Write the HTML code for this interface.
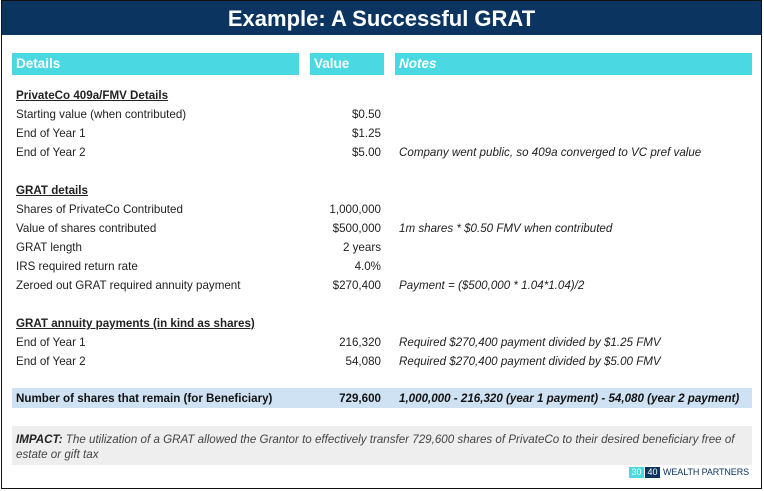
<!DOCTYPE html><html><head><style>
body{margin:0;width:764px;height:491px;background:#fff;font-family:"Liberation Sans",Arial,sans-serif;position:relative;overflow:hidden}
.frame{position:absolute;left:1px;top:0;width:759px;height:487px;border:1px solid #111}
.hdr{position:absolute;left:2px;top:1px;width:759px;height:34px;background:#0b3560;color:#fff;font-weight:bold;font-size:22px;text-align:center;line-height:35px}
.bar{position:absolute;top:53px;height:22px;background:#4ad8e2;color:#fff;font-weight:bold;font-size:13.5px;line-height:22px;padding-left:4px;box-sizing:border-box}
.t{position:absolute;font-size:11.6px;color:#222;white-space:nowrap;line-height:14px}
.v{position:absolute;right:383px;font-size:11.6px;color:#222;white-space:nowrap;line-height:14px;text-align:right}
.n{position:absolute;left:399px;font-size:11.6px;font-style:italic;color:#222;white-space:nowrap;line-height:14px}
.u{font-weight:bold;text-decoration:underline}
</style></head><body>
<div class="frame"></div>
<div class="hdr">Example: A Successful GRAT</div>
<div class="bar" style="left:12px;width:287px">Details</div>
<div class="bar" style="left:310px;width:74px">Value</div>
<div class="bar" style="left:395px;width:357px;font-style:italic">Notes</div>

<div class="t u" style="left:16px;top:89px">PrivateCo 409a/FMV Details</div>
<div class="t" style="left:16px;top:108px">Starting value (when contributed)</div><div class="v" style="top:108px">$0.50</div>
<div class="t" style="left:16px;top:127px">End of Year 1</div><div class="v" style="top:127px">$1.25</div>
<div class="t" style="left:16px;top:146px">End of Year 2</div><div class="v" style="top:146px">$5.00</div><div class="n" style="top:146px">Company went public, so 409a converged to VC pref value</div>

<div class="t u" style="left:16px;top:184px">GRAT details</div>
<div class="t" style="left:16px;top:203px">Shares of PrivateCo Contributed</div><div class="v" style="top:203px">1,000,000</div>
<div class="t" style="left:16px;top:222px">Value of shares contributed</div><div class="v" style="top:222px">$500,000</div><div class="n" style="top:222px">1m shares * $0.50 FMV when contributed</div>
<div class="t" style="left:16px;top:241px">GRAT length</div><div class="v" style="top:241px">2 years</div>
<div class="t" style="left:16px;top:260px">IRS required return rate</div><div class="v" style="top:260px">4.0%</div>
<div class="t" style="left:16px;top:279px">Zeroed out GRAT required annuity payment</div><div class="v" style="top:279px">$270,400</div><div class="n" style="top:279px">Payment = ($500,000 * 1.04*1.04)/2</div>

<div class="t u" style="left:16px;top:317px">GRAT annuity payments (in kind as shares)</div>
<div class="t" style="left:16px;top:336px">End of Year 1</div><div class="v" style="top:336px">216,320</div><div class="n" style="top:336px">Required $270,400 payment divided by $1.25 FMV</div>
<div class="t" style="left:16px;top:355px">End of Year 2</div><div class="v" style="top:355px">54,080</div><div class="n" style="top:355px">Required $270,400 payment divided by $5.00 FMV</div>

<div style="position:absolute;left:12px;top:388px;width:740px;height:20px;background:#cfe2f3"></div>
<div class="t" style="left:16px;top:392px;font-weight:bold;color:#111">Number of shares that remain (for Beneficiary)</div>
<div class="v" style="top:392px;font-weight:bold;color:#111">729,600</div>
<div class="n" style="top:392px;font-weight:bold;color:#111">1,000,000 - 216,320 (year 1 payment) - 54,080 (year 2 payment)</div>

<div style="position:absolute;left:12px;top:426px;width:740px;height:39px;background:#eeeeee"></div>
<div class="t" style="left:16px;top:432px;font-style:italic;color:#444;white-space:normal;width:735px;line-height:15px"><b style="color:#222">IMPACT:</b> The utilization of a GRAT allowed the Grantor to effectively transfer 729,600 shares of PrivateCo to their desired beneficiary free of estate or gift tax</div>

<div style="position:absolute;left:629px;top:467px;width:15px;height:11px;background:#4ad8e2;color:#fff;font-size:9px;line-height:11px;text-align:center">30</div>
<div style="position:absolute;left:645px;top:467px;width:15px;height:11px;background:#0b3560;color:#fff;font-size:9px;line-height:11px;text-align:center">40</div>
<div style="position:absolute;left:663px;top:466px;font-size:9px;line-height:12px;color:#0b3560;letter-spacing:-0.1px">WEALTH PARTNERS</div>
</body></html>
